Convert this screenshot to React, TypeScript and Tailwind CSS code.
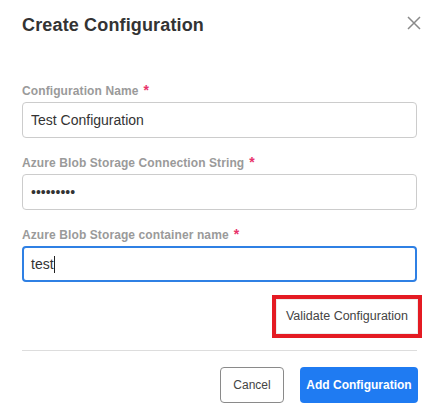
import React from "react";

const font = { fontFamily: '"Liberation Sans", Arial, sans-serif' };

function Label({ children }: { children: React.ReactNode }) {
  return (
    <div className="flex items-start h-[14px] text-[12px] leading-[14px] font-bold text-[#9a9a9a] tracking-[0.1px]">
      <span>{children}</span>
      <span className="ml-[5px] text-[#e8336b] text-[14px] leading-[12px]">*</span>
    </div>
  );
}

export default function App() {
  return (
    <div className="w-[441px] h-[414px] bg-white overflow-hidden" style={font}>
      <div className="pl-[22px] pr-[24px]">
        <div className="flex items-start justify-between pt-[14px]">
          <h1 className="text-[18px] leading-[22px] font-bold text-[#333] tracking-[0.15px]">Create Configuration</h1>
          <button className="mt-[1px] mr-[-5px] w-[16px] h-[16px] flex items-center justify-center text-[#8a8a8a]">
            <svg width="14" height="14" viewBox="0 0 14 14" fill="none" stroke="currentColor" strokeWidth="1.5">
              <path d="M1 1 L13 13 M13 1 L1 13" />
            </svg>
          </button>
        </div>

        <div className="mt-[48px]">
          <Label>Configuration Name</Label>
          <input
            readOnly
            value="Test Configuration"
            className="mt-[4px] block w-full h-[36px] px-[8px] border border-[#cccccc] rounded-[4px] text-[14px] text-[#333] outline-none"
            style={font}
          />
        </div>

        <div className="mt-[18px]">
          <Label>Azure Blob Storage Connection String</Label>
          <input
            readOnly
            type="password"
            value="123456789"
            className="mt-[4px] block w-full h-[36px] px-[8px] border border-[#cccccc] rounded-[4px] text-[14px] text-[#333] outline-none"
            style={font}
          />
        </div>

        <div className="mt-[18px]">
          <Label>Azure Blob Storage container name</Label>
          <div className="mt-[4px] flex items-center w-full h-[36px] px-[7px] border-2 border-[#2f80e4] rounded-[4px] text-[14px] text-[#333]">
            <span>test</span>
            <span className="inline-block w-[1px] h-[17px] bg-[#222]" />
          </div>
        </div>

        <div className="flex justify-end mt-[13px] mr-[-5px]">
          <div className="border-[4px] border-[#e41b23]">
            <button className="h-[35px] px-[9px] bg-white border border-[#ececec] text-[12.5px] text-[#444]" style={font}>
              Validate Configuration
            </button>
          </div>
        </div>

        <div className="mt-[12px] border-t border-[#dddddd]" />

        <div className="flex justify-end gap-[16px] mt-[16px] mr-[-1px]">
          <button className="h-[36px] w-[64px] border border-[#8a8a8a] rounded-[4px] bg-white text-[12px] text-[#444]" style={font}>
            Cancel
          </button>
          <button className="h-[36px] w-[118px] rounded-[4px] bg-[#1f7bf2] text-white text-[12px] font-bold" style={font}>
            Add Configuration
          </button>
        </div>
      </div>
    </div>
  );
}
